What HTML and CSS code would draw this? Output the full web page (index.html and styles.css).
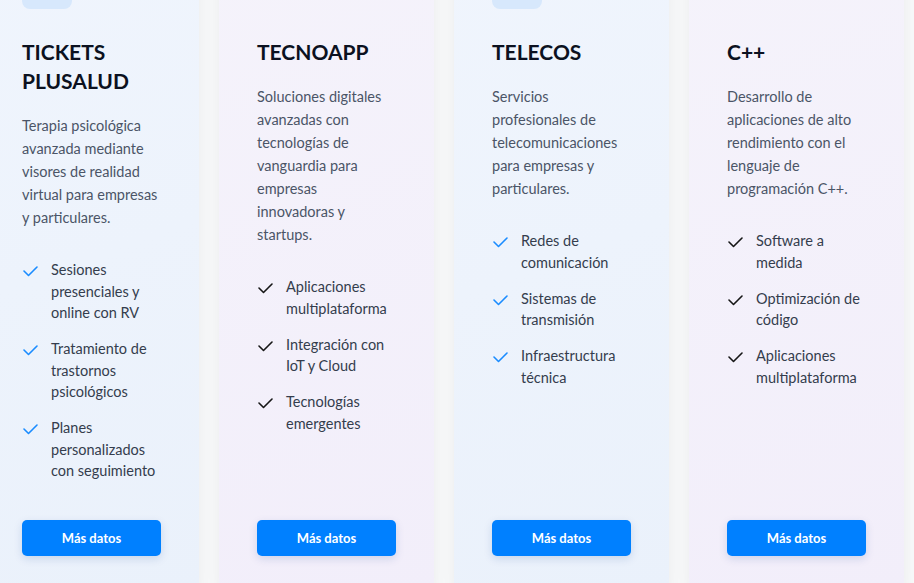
FILE: index.html
```html
<!DOCTYPE html>
<html lang="es">
<head>
<meta charset="utf-8">
<title>Servicios</title>
<link rel="stylesheet" href="styles.css">
</head>
<body>
<section class="cards">
  <article class="card card-blue">
    <div class="card-icon"></div>
    <h3 class="card-title">TICKETS PLUSALUD</h3>
    <p class="card-desc">Terapia psicológica avanzada mediante visores de realidad virtual para empresas y particulares.</p>
    <ul class="features">
      <li><svg class="check" viewBox="0 0 16 16"><path d="M2 9 L6.5 13.5 L15 5"/></svg><span>Sesiones presenciales y online con RV</span></li>
      <li><svg class="check" viewBox="0 0 16 16"><path d="M2 9 L6.5 13.5 L15 5"/></svg><span>Tratamiento de trastornos psicológicos</span></li>
      <li><svg class="check" viewBox="0 0 16 16"><path d="M2 9 L6.5 13.5 L15 5"/></svg><span>Planes personalizados con seguimiento</span></li>
    </ul>
    <a class="btn" href="#">Más datos</a>
  </article>
  <article class="card card-violet">
    <div class="card-icon"></div>
    <h3 class="card-title">TECNOAPP</h3>
    <p class="card-desc">Soluciones digitales avanzadas con tecnologías de vanguardia para empresas<br>innovadoras y startups.</p>
    <ul class="features">
      <li><svg class="check" viewBox="0 0 16 16"><path d="M2 9 L6.5 13.5 L15 5"/></svg><span>Aplicaciones multiplataforma</span></li>
      <li><svg class="check" viewBox="0 0 16 16"><path d="M2 9 L6.5 13.5 L15 5"/></svg><span>Integración con IoT y Cloud</span></li>
      <li><svg class="check" viewBox="0 0 16 16"><path d="M2 9 L6.5 13.5 L15 5"/></svg><span>Tecnologías emergentes</span></li>
    </ul>
    <a class="btn" href="#">Más datos</a>
  </article>
  <article class="card card-blue">
    <div class="card-icon"></div>
    <h3 class="card-title">TELECOS</h3>
    <p class="card-desc">Servicios profesionales de telecomunicaciones para empresas y particulares.</p>
    <ul class="features">
      <li><svg class="check" viewBox="0 0 16 16"><path d="M2 9 L6.5 13.5 L15 5"/></svg><span>Redes de comunicación</span></li>
      <li><svg class="check" viewBox="0 0 16 16"><path d="M2 9 L6.5 13.5 L15 5"/></svg><span>Sistemas de transmisión</span></li>
      <li><svg class="check" viewBox="0 0 16 16"><path d="M2 9 L6.5 13.5 L15 5"/></svg><span>Infraestructura técnica</span></li>
    </ul>
    <a class="btn" href="#">Más datos</a>
  </article>
  <article class="card card-violet">
    <div class="card-icon"></div>
    <h3 class="card-title">C++</h3>
    <p class="card-desc">Desarrollo de aplicaciones de alto rendimiento con el lenguaje de programación C++.</p>
    <ul class="features">
      <li><svg class="check" viewBox="0 0 16 16"><path d="M2 9 L6.5 13.5 L15 5"/></svg><span>Software a medida</span></li>
      <li><svg class="check" viewBox="0 0 16 16"><path d="M2 9 L6.5 13.5 L15 5"/></svg><span>Optimización de código</span></li>
      <li><svg class="check" viewBox="0 0 16 16"><path d="M2 9 L6.5 13.5 L15 5"/></svg><span>Aplicaciones multiplataforma</span></li>
    </ul>
    <a class="btn" href="#">Más datos</a>
  </article>
</section>
</body>
</html>
```
FILE: styles.css
```css
* { box-sizing: border-box; }
html, body {
  margin: 0;
  padding: 0;
  background: #f8f9fa;
  overflow: hidden;
}
body {
  font-family: Lato, "Noto Sans", sans-serif;
  width: 914px;
  height: 583px;
}
.cards {
  display: flex;
  gap: 20px;
  margin-left: -16px;
  margin-top: -79px;
  align-items: stretch;
}
.card {
  flex: 0 0 215px;
  display: flex;
  flex-direction: column;
  padding: 38px 38px 38px;
  border-radius: 12px;
  box-shadow: 0 4px 18px rgba(0, 0, 0, 0.06);
}
.card-blue {
  background: linear-gradient(160deg, #f0f5fd 0%, #eaf1fb 100%);
}
.card-violet {
  background: linear-gradient(160deg, #f5f3fb 0%, #f2eefa 100%);
}
.card-icon {
  width: 50px;
  height: 50px;
  border-radius: 8px;
  margin-bottom: 28px;
}
.card-blue .card-icon { background: #d7e8fc; }
.card-violet .card-icon { background: transparent; }
.card-title {
  margin: 0 0 19px;
  font-size: 21px;
  line-height: 29px;
  font-weight: 700;
  color: #0b1120;
}
.card-desc {
  margin: 0 0 30px;
  font-size: 14.5px;
  line-height: 23px;
  color: #4b5567;
}
.features {
  list-style: none;
  margin: 0 0 38px;
  padding: 0;
}
.features li {
  display: flex;
  gap: 13px;
  font-size: 14.5px;
  line-height: 21.5px;
  color: #343d4d;
  margin-bottom: 14.5px;
}
.features li:last-child { margin-bottom: 0; }
.check {
  flex: 0 0 16px;
  width: 16px;
  height: 16px;
  margin-top: 3px;
  fill: none;
  stroke-width: 1.6;
  stroke-linecap: round;
  stroke-linejoin: round;
}
.card-blue .check { stroke: #1a8cff; }
.card-violet .check { stroke: #161616; }
.btn {
  margin-top: auto;
  display: flex;
  align-items: center;
  justify-content: center;
  height: 36px;
  border-radius: 5px;
  background: #0080ff;
  color: #ffffff;
  font-size: 13px;
  font-weight: 700;
  text-decoration: none;
  box-shadow: 0 3px 8px rgba(0, 60, 140, 0.15);
}
```
